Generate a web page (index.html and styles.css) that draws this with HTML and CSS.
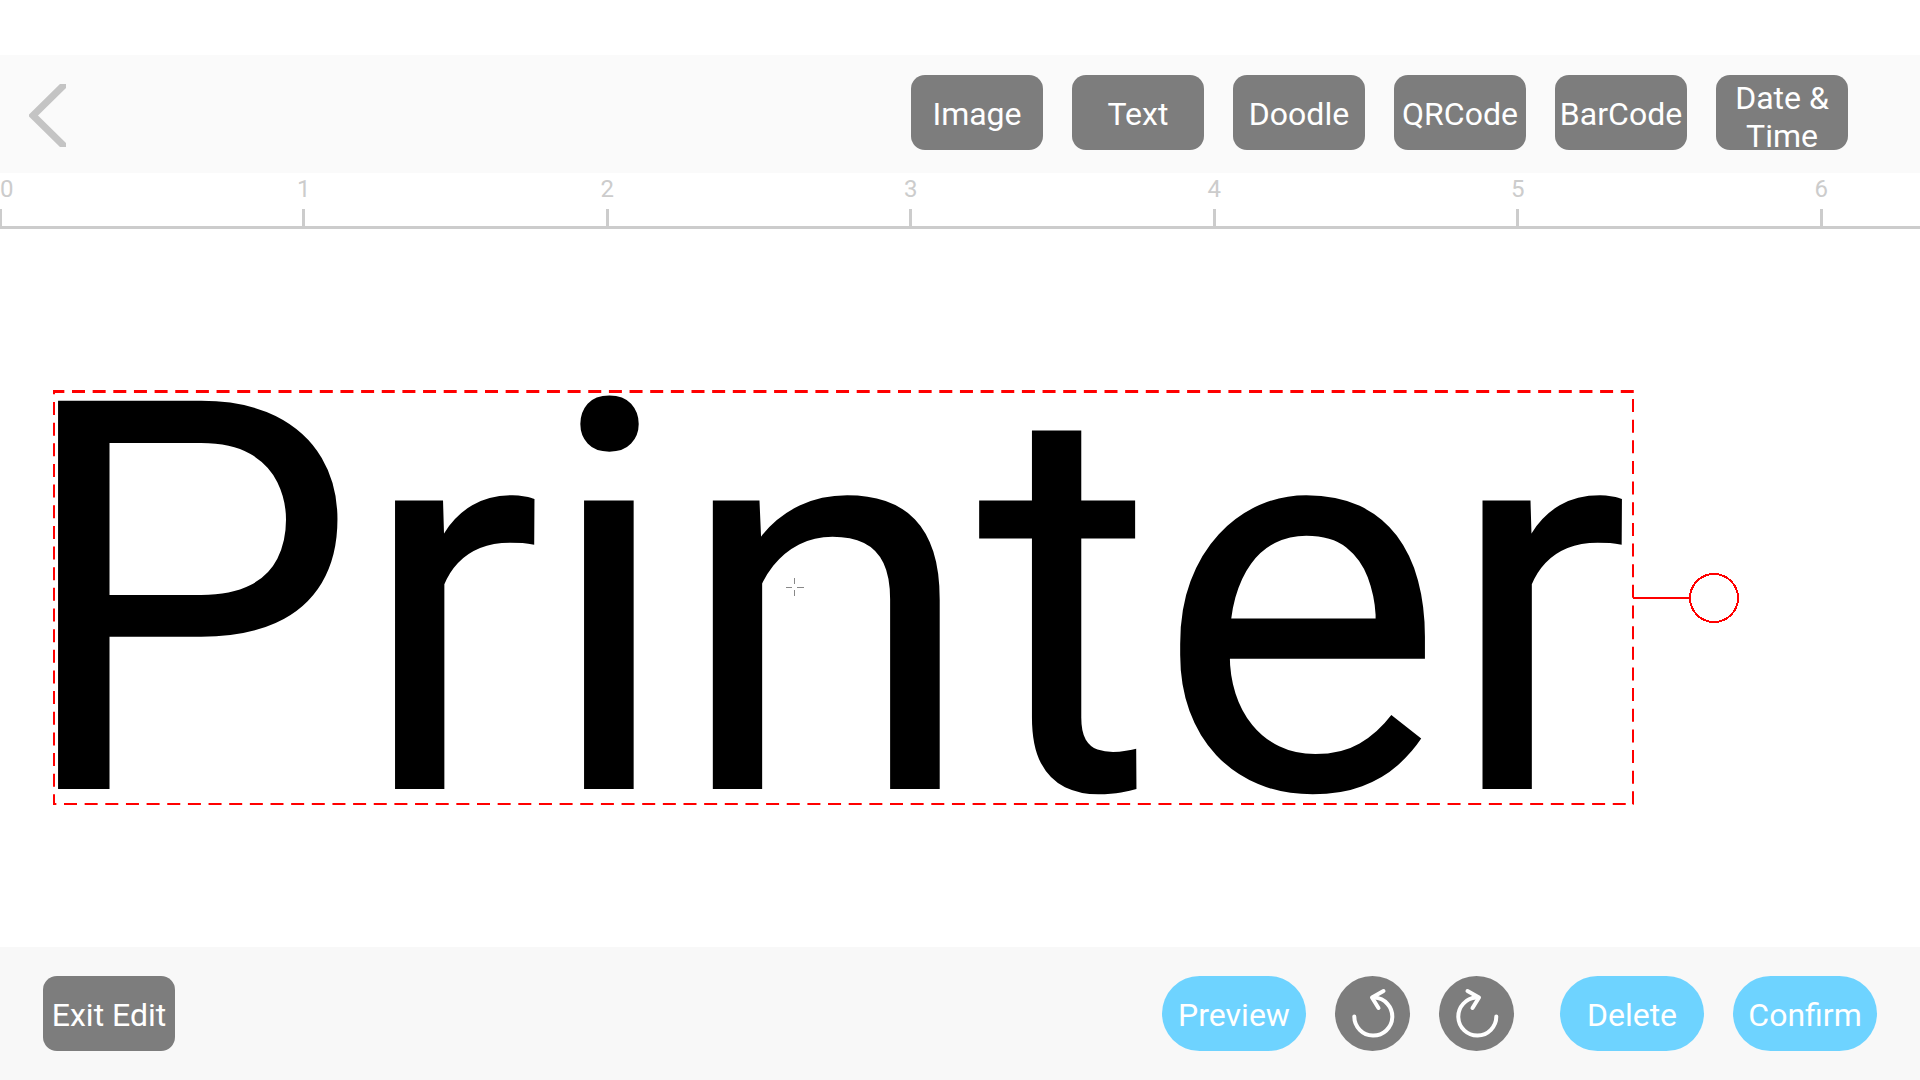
FILE: index.html
```html
<!DOCTYPE html>
<html lang="en">
<head>
    <meta charset="UTF-8">
    <meta name="viewport" content="width=device-width, initial-scale=1.0">
    <title>Printer</title>
    <link rel="stylesheet" href="styles.css">
</head>
<body>
    <div class="editor">
        <header class="toolbar">
            <button class="back-btn" aria-label="Back">
                <svg width="37" height="63" viewBox="0 0 37 63" fill="none" stroke="#c4c4c4" stroke-width="7">
                    <path d="M38 -2L4 31.500L38 65"/>
                </svg>
            </button>
            <nav class="tools">
                <button class="btn">Image</button>
                <button class="btn">Text</button>
                <button class="btn">Doodle</button>
                <button class="btn">QRCode</button>
                <button class="btn">BarCode</button>
                <button class="btn two-line">Date &amp; Time</button>
            </nav>
        </header>

        <div class="ruler">
            <div class="mark first"><span>0</span></div>
            <div class="mark"><span>1</span></div>
            <div class="mark"><span>2</span></div>
            <div class="mark"><span>3</span></div>
            <div class="mark"><span>4</span></div>
            <div class="mark"><span>5</span></div>
            <div class="mark"><span>6</span></div>
        </div>

        <main class="canvas">
            <div class="label-text">Printer</div>
            <!-- selection frame, resize handle and centre mark -->
            <svg class="selection" width="1690" height="415" viewBox="0 0 1690 415" fill="none" stroke="#ff0000" stroke-width="2">
                <g stroke-dasharray="13 7.65">
                    <path d="M0 1.500H1581" stroke-width="3" stroke-dashoffset="1.65"/>
                    <path d="M1 0V415" stroke-dashoffset="8.65"/>
                    <path d="M1580 9V415"/>
                    <path d="M0 414H1581" stroke-dashoffset="9.65"/>
                </g>
                <path d="M1580 208H1637"/>
                <circle cx="1661" cy="208" r="24" shape-rendering="crispEdges"/>
                <path d="M733 197.500h6M744 197.500h7M741.500 188v6M741.500 200v6" stroke="#888888" stroke-width="1"/>
            </svg>
        </main>

        <footer class="bottom-bar">
            <button class="btn">Exit Edit</button>
            <div class="actions">
                <button class="btn pill">Preview</button>
                <button class="round-btn" aria-label="Undo">
                    <svg width="75" height="75" viewBox="0 0 75 75" fill="none" stroke="#fff" stroke-width="4" stroke-linecap="round" stroke-linejoin="round">
                        <path d="M19.300 40.500A19 19 0 1 0 39.500 21.600"/>
                        <path d="M48.500 15L37 21.500L43.500 32"/>
                    </svg>
                </button>
                <button class="round-btn" aria-label="Redo">
                    <svg width="75" height="75" viewBox="0 0 75 75" fill="none" stroke="#fff" stroke-width="4" stroke-linecap="round" stroke-linejoin="round">
                        <path d="M57.300 40.500A19 19 0 1 1 37.300 21.600"/>
                        <path d="M28.500 15L40 21.500L33.500 32"/>
                    </svg>
                </button>
            </div>
            <div class="actions">
                <button class="btn pill">Delete</button>
                <button class="btn pill">Confirm</button>
            </div>
        </footer>
    </div>
</body>
</html>
```
FILE: styles.css
```css
body {
    margin: 0;
    font-family: Roboto, "Liberation Sans", sans-serif;
    background-color: #fff;
}
button {
    padding: 0;
    border: none;
    font-family: inherit;
    cursor: pointer;
}
svg {
    display: block;
}
.editor {
    box-sizing: border-box;
    min-height: 100vh;
    padding-top: 55px;
    display: flex;
    flex-direction: column;
    overflow: hidden;
}
.toolbar {
    display: flex;
    justify-content: space-between;
    align-items: flex-start;
    padding: 20px 72px 23px 29px;
    background-color: #fafafa;
}
.back-btn {
    padding-top: 9px;
    background: none;
}
.tools {
    display: flex;
    gap: 29px;
}
.btn {
    box-sizing: border-box;
    width: 132px;
    height: 75px;
    padding-top: 2px;
    border-radius: 14px;
    background-color: #7d7d7d;
    color: #fff;
    font-size: 32px;
    line-height: 38px;
    white-space: nowrap;
}
.btn.two-line {
    display: flex;
    justify-content: center;
    padding: 4px 10px 0;
    white-space: normal;
}
.btn.pill {
    width: 144px;
    border-radius: 38px;
    background-color: #6ed3ff;
}
.round-btn {
    width: 75px;
    height: 75px;
    border-radius: 50%;
    background-color: #7d7d7d;
}

/* Ruler: one mark per unit, centred in its column */
.ruler {
    display: flex;
    height: 53px;
    border-bottom: 3px solid #ccc;
    overflow: hidden;
}
.mark {
    flex: 0 0 15.81%;
    display: flex;
    flex-direction: column;
    align-items: center;
    justify-content: space-between;
    color: #ccc;
    font-size: 24px;
    line-height: 32px;
}
.mark::after {
    content: "";
    width: 3px;
    height: 17px;
    background-color: #ccc;
}
.mark.first {
    flex-basis: 7.91%;
    align-items: flex-start;
}
.mark.first::after {
    width: 2px;
}

.canvas {
    flex: 1;
    position: relative;
    overflow: hidden;
}
.label-text {
    position: absolute;
    left: 13px;
    top: 53px;
    font-size: 546px;
    line-height: 640px;
    font-kerning: none;
    white-space: nowrap;
    color: #000;
}
.selection {
    position: absolute;
    left: 53px;
    top: 161px;
}

.bottom-bar {
    display: flex;
    gap: 46px;
    padding: 29px 43px;
    background-color: #f8f8f8;
}
.bottom-bar > .btn {
    margin-right: auto;
}
.actions {
    display: flex;
    gap: 29px;
}
```
